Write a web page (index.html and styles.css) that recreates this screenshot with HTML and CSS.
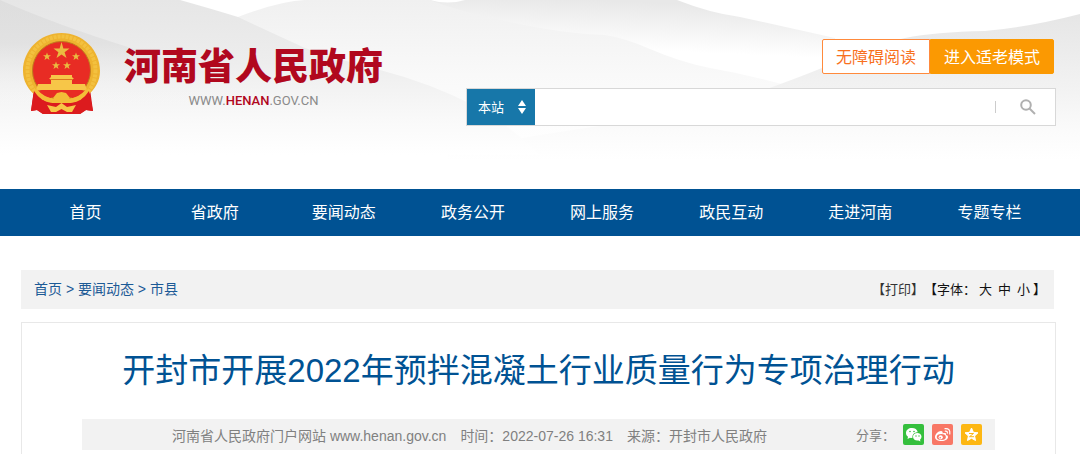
FILE: index.html
```html
<!DOCTYPE html>
<html lang="zh-CN">
<head>
    <meta charset="UTF-8">
    <meta name="viewport" content="width=device-width, initial-scale=1.0">
    <title>开封市开展2022年预拌混凝土行业质量行为专项治理行动</title>
    <link rel="stylesheet" href="styles.css">
</head>
<body>
    <header class="header">
        <svg class="header-bg" viewBox="0 0 1080 189" preserveAspectRatio="none" aria-hidden="true">
            <defs>
                <linearGradient id="left" gradientUnits="userSpaceOnUse" x1="0" y1="0" x2="0" y2="155">
                    <stop offset="0" stop-color="#e6e6e6"/>
                    <stop offset="0.4" stop-color="#ededed"/>
                    <stop offset="0.8" stop-color="#fafafa"/>
                    <stop offset="1" stop-color="#ffffff"/>
                </linearGradient>
                <linearGradient id="shade" gradientUnits="userSpaceOnUse" x1="0" y1="0" x2="0" y2="110">
                    <stop offset="0" stop-color="#d8d8d8" stop-opacity="0.6"/>
                    <stop offset="0.4" stop-color="#dcdcdc" stop-opacity="0.6"/>
                    <stop offset="1" stop-color="#ffffff" stop-opacity="0"/>
                </linearGradient>
                <linearGradient id="mid" gradientUnits="userSpaceOnUse" x1="0" y1="0" x2="0" y2="150">
                    <stop offset="0" stop-color="#f0f0f0"/>
                    <stop offset="0.5" stop-color="#f9f9f9"/>
                    <stop offset="1" stop-color="#ffffff"/>
                </linearGradient>
                <linearGradient id="back" gradientUnits="userSpaceOnUse" x1="590" y1="0" x2="588" y2="48">
                    <stop offset="0" stop-color="#e8e8e8"/>
                    <stop offset="1" stop-color="#ffffff"/>
                </linearGradient>
                <linearGradient id="right" gradientUnits="userSpaceOnUse" x1="0" y1="15" x2="0" y2="160">
                    <stop offset="0" stop-color="#e6e6e6"/>
                    <stop offset="0.5" stop-color="#f2f2f2"/>
                    <stop offset="0.8" stop-color="#fbfbfb"/>
                    <stop offset="1" stop-color="#ffffff"/>
                </linearGradient>
            </defs>
            <path fill="url(#back)" d="M430 0Q448 5 465 0H677Q710 13 740 17L835 38V64H430Z"/>
            <path fill="url(#mid)" d="M220 25L238 17Q280 1 305 0H430Q465 14 540 28Q575 34 605 35Q625 38 650 49Q680 62 710 68Q750 75 785 85V155H220Z"/>
            <path fill="url(#right)" d="M448 151Q500 142 540 135Q620 122 700 112Q778 86 822 68Q870 46 905 38Q935 32 985 31Q1030 27 1080 14V165H448Z"/>
            <path fill="url(#left)" d="M0 0H180Q212 9 238 17Q270 32 305 48Q340 60 380 70Q430 83 475 106Q510 125 540 155H0Z"/>
            <path fill="url(#shade)" d="M0 0Q57 25 131 48Q230 80 320 110H0Z"/>
        </svg>
        <div class="wrap header-inner">
            <a class="logo" href="#">
                <svg class="emblem" viewBox="0 0 77 81" aria-hidden="true">
                    <path fill="#d4151b" d="M11 56L8 78L14 77L20 81H57L63 77L70 78L67 56Z"/>
                    <path fill="none" stroke="#a51217" d="M13 63L11 75M17 66L15 76M21 69L19 78M65 63L67 75M61 66L63 76M57 69L59 78"/>
                    <path fill="#eeb32f" d="M38.500 0C17 0 0 17 0 38C0 48 5 56 12 62C20 69 29 71 38.500 71S57 69 65 62C72 56 77 48 77 38C77 17 60 0 38.500 0Z"/>
                    <circle cx="38.500" cy="37.500" r="34" fill="none" stroke="#f7ca4b" stroke-width="4" stroke-dasharray="3 1" stroke-opacity="0.6"/>
                    <circle cx="38.500" cy="37.500" r="29" fill="#e82c24" stroke="#c07c1d"/>
                    <path fill="#eabb40" d="M38.500 9L40.400 15.500H46.500L41.600 19.200L43.500 25L38.500 21.400L33.500 25L35.400 19.200L30.500 15.500H36.600Z"/>
                    <g fill="#eabb40">
                        <path id="star" d="M24 19.500L25 22.300H28L25.600 24.100L26.500 27L24 25.200L21.500 27L22.400 24.100L20 22.300H23Z"/>
                        <use href="#star" x="29"/>
                        <use href="#star" x="9" y="9"/>
                        <use href="#star" x="20" y="9"/>
                    </g>
                    <path fill="#f7c648" d="M28 42H49V44L51 46H49V51H62L64 57H13L15 51H28V46H26L28 44Z"/>
                    <path stroke="#d9791f" d="M27 46.500H50"/>
                    <path fill="#e82c24" d="M14 57.500H63Q57 64 49 65L45 60L38.500 58L32 60L28 65Q20 64 14 57.500Z"/>
                    <path fill="none" stroke="#f3bd38" stroke-width="4" d="M12 57Q20 67 32 68H45Q57 67 65 57"/>
                    <path fill="#f3bd38" d="M30 65L34 60L38.500 59L43 60L47 65L43 69H34Z"/>
                    <path fill="#dc1b1e" d="M11 58Q18 69 29 70L26 81H20L14 77L8 78ZM66 58Q59 69 48 70L51 81H57L63 77L70 78Z"/>
                    <path fill="#dc1b1e" d="M29 70H48L51 81H26Z"/>
                    <path fill="#f7c648" d="M24 72L33 74L38.500 70L44 74L53 72L49 79H44L38.500 76L33 79H28Z"/>
                </svg>
                <span class="logo-text">
                    <span class="logo-name">河南省人民政府</span>
                    <span class="logo-url">WWW.<b>HENAN</b>.GOV.CN</span>
                </span>
            </a>
            <div class="tools">
                <div class="modes">
                    <button type="button" class="mode">无障碍阅读</button>
                    <button type="button" class="mode mode-old">进入适老模式</button>
                </div>
                <form class="search">
                    <div class="scope">
                        <select class="scope-select" aria-label="搜索范围">
                            <option>本站</option>
                        </select>
                        <svg class="scope-arrow" viewBox="0 0 8 14" aria-hidden="true"><path fill="#fff" d="M4 0L8 6H0ZM4 14L0 8H8Z"/></svg>
                    </div>
                    <input type="text" class="search-input" aria-label="搜索">
                    <button type="button" class="search-btn" aria-label="搜索">
                        <svg viewBox="0 0 16 16" aria-hidden="true"><circle cx="6" cy="6" r="4.800"/><path d="M9.500 9.500L15 15"/></svg>
                    </button>
                </form>
            </div>
        </div>
    </header>

    <nav class="nav">
        <div class="wrap nav-list">
            <a href="#">首页</a>
            <a href="#">省政府</a>
            <a href="#">要闻动态</a>
            <a href="#">政务公开</a>
            <a href="#">网上服务</a>
            <a href="#">政民互动</a>
            <a href="#">走进河南</a>
            <a href="#">专题专栏</a>
        </div>
    </nav>

    <main class="wrap">
        <div class="crumbs">
            <div class="path"><a href="#">首页</a> &gt; <a href="#">要闻动态</a> &gt; <a href="#">市县</a></div>
            <div class="page-tools">
                <button type="button" class="print">【打印】</button>
                <span>【字体：</span>
                <button type="button">大</button>
                <button type="button">中</button>
                <button type="button">小</button>
                <span>】</span>
            </div>
        </div>

        <article class="article">
            <h1>开封市开展2022年预拌混凝土行业质量行为专项治理行动</h1>
            <div class="meta">
                <div class="source">
                    <span>河南省人民政府门户网站 www.henan.gov.cn</span>
                    <span>时间：2022-07-26 16:31</span>
                    <span>来源：开封市人民政府</span>
                </div>
                <div class="share">
                    <span>分享：</span>
                    <a class="wechat" href="#" aria-label="微信">
                        <svg viewBox="0 0 21 21" aria-hidden="true">
                            <path fill="#fff" d="M9 4C5.500 4 3 6 3 9C3 10.600 3.800 12 5 12.800L4.500 15L7 13.700Q8 14 9.500 13.800C9 10.500 11.500 8.300 14.800 8.300C14.200 5.500 12 4 9 4Z"/>
                            <path fill="#fff" d="M14.300 9C11.800 9 10 10.700 10 12.800S11.800 16.600 14.300 16.600L15.500 16.400L17.500 17.400L17 15.700Q18.500 14.500 18.500 12.800C18.500 10.700 16.700 9 14.300 9Z"/>
                            <g fill="#35bf3d"><circle cx="7" cy="7.500" r="0.800"/><circle cx="11" cy="7.500" r="0.800"/><circle cx="13" cy="12" r="0.700"/><circle cx="16" cy="12" r="0.700"/></g>
                        </svg>
                    </a>
                    <a class="weibo" href="#" aria-label="微博">
                        <svg viewBox="0 0 21 21" aria-hidden="true">
                            <path fill="#fff" d="M9 7C6 7 3 10.500 3 13C3 15.600 6 17 9.500 17C13.500 17 16 15 16 13C16 11.800 15 11.200 14 11C14.600 9 13 8.500 10.500 9.500C11 8 10.500 7 9 7Z"/>
                            <ellipse cx="9.300" cy="13" rx="4.600" ry="3" fill="#f87765"/>
                            <circle cx="8.700" cy="13.300" r="2.100" fill="#fff"/>
                            <circle cx="8.200" cy="13.700" r="0.800" fill="#f87765"/>
                            <path fill="none" stroke="#fff" stroke-width="1.200" stroke-linecap="round" d="M13 4.600Q18.500 4 17.800 10M13.300 7.200Q15.700 6.800 15.300 9.200"/>
                        </svg>
                    </a>
                    <a class="qzone" href="#" aria-label="QQ空间">
                        <svg viewBox="0 0 21 21" aria-hidden="true">
                            <path fill="#fff" stroke="#fff" stroke-linejoin="round" d="M10.500 4L12.400 8.300L17 8.800L13.600 12L14.500 16.500L10.500 14.200L6.500 16.500L7.400 12L4 8.800L8.600 8.300Z"/>
                            <path fill="none" stroke="#fdb713" d="M8 9.500H12.500L8.500 12.700H13"/>
                        </svg>
                    </a>
                </div>
            </div>
        </article>
    </main>
</body>
</html>
```
FILE: styles.css
```css
* {
    box-sizing: border-box;
}
body {
    margin: 0;
    background: #fff;
    color: #333;
    font-family: "Liberation Sans", "Noto Sans CJK SC", sans-serif;
    font-size: 14px;
}
a {
    color: inherit;
    text-decoration: none;
}
button, select, input {
    font-family: inherit;
    margin: 0;
    padding: 0;
    border: none;
    background: none;
}
button {
    cursor: pointer;
}
.wrap {
    padding: 0 24px 0 21px;
}

/* header */
.header {
    position: relative;
    height: 189px;
}
.header-bg {
    position: absolute;
    top: 0;
    left: 0;
    width: 100%;
    height: 100%;
}
.header-inner {
    position: relative;
    display: flex;
    justify-content: space-between;
}
.logo {
    display: flex;
    gap: 24px;
    padding: 33px 0 0 2px;
}
.emblem {
    width: 77px;
    height: 81px;
}
.logo-text {
    display: flex;
    flex-direction: column;
    align-items: center;
    padding-top: 13px;
}
.logo-name {
    color: #b1081e;
    font-size: 37px;
    font-weight: 900;
    line-height: 44px;
}
.logo-url {
    color: #8a8a8a;
    font-family: Roboto, sans-serif;
    font-size: 13px;
    line-height: 22px;
}
.logo-url b {
    color: #b1081e;
    font-weight: 500;
}
.tools {
    display: flex;
    flex-direction: column;
    align-items: flex-end;
    gap: 14px;
    width: 57%;
    padding-top: 39px;
}
.modes {
    display: flex;
    margin-right: 2px;
}
.mode {
    height: 35px;
    padding: 0 13px 2px;
    border: 1px solid #ff8a3c;
    border-radius: 2px 0 0 2px;
    background: #fff;
    color: #f8701d;
    font-size: 16px;
}
.mode-old {
    border-color: #fb9902;
    border-radius: 0 2px 2px 0;
    background: #fb9902;
    color: #fff;
}
.search {
    display: flex;
    width: 100%;
    height: 38px;
    border: 1px solid #d8d8d8;
    background: #fff;
}
.scope {
    position: relative;
    width: 68px;
    background: #1777a9;
}
.scope-select {
    width: 100%;
    height: 100%;
    padding-left: 11px;
    appearance: none;
    color: #fff;
    font-size: 13px;
}
.scope-arrow {
    position: absolute;
    top: 11px;
    right: 9px;
    width: 8px;
    height: 14px;
    pointer-events: none;
}
.search-input {
    flex: 1;
    min-width: 0;
}
.search-btn {
    display: flex;
    align-items: center;
    justify-content: center;
    align-self: center;
    width: 60px;
    height: 12px;
    padding-left: 4px;
    border-left: 1px solid #ccc;
}
.search-btn svg {
    flex: none;
    width: 16px;
    height: 16px;
    fill: none;
    stroke: #b0b0b0;
    stroke-width: 2;
}

/* nav */
.nav {
    background: #005293;
}
.nav-list {
    display: flex;
    padding-right: 26px;
}
.nav-list a {
    flex: 1;
    color: #fff;
    font-size: 16px;
    line-height: 47px;
    text-align: center;
}

/* breadcrumb */
.crumbs {
    display: flex;
    align-items: center;
    justify-content: space-between;
    height: 39px;
    margin: 34px 2px 13px 0;
    padding: 0 8px 3px 13px;
    background: #f2f2f2;
}
.path {
    color: #1c5a96;
}
.page-tools {
    display: flex;
    align-items: center;
    color: #111;
    font-size: 13px;
}
.page-tools button {
    padding: 0 3px;
    color: inherit;
    font-size: 13px;
}
.page-tools .print {
    padding: 0;
    color: #333;
}

/* article */
.article {
    padding: 22px 60px 24px;
    border: 1px solid #e8e8e8;
    border-bottom: none;
}
.article h1 {
    margin: 0 0 22px;
    color: #005293;
    font-size: 33px;
    font-weight: normal;
    line-height: 52px;
    text-align: center;
    white-space: nowrap;
}
.meta {
    display: flex;
    align-items: center;
    justify-content: space-between;
    height: 31px;
    padding: 0 13px 0 90px;
    background: #f2f2f2;
    color: #808080;
}
.source {
    display: flex;
    gap: 14px;
}
.share {
    display: flex;
    align-items: center;
    gap: 8px;
    font-size: 13px;
}
.share a {
    width: 21px;
    height: 21px;
    border-radius: 2px;
}
.share svg {
    display: block;
}
.wechat {
    background: #35bf3d;
}
.weibo {
    background: #f87765;
}
.qzone {
    background: #fdb713;
}
```
